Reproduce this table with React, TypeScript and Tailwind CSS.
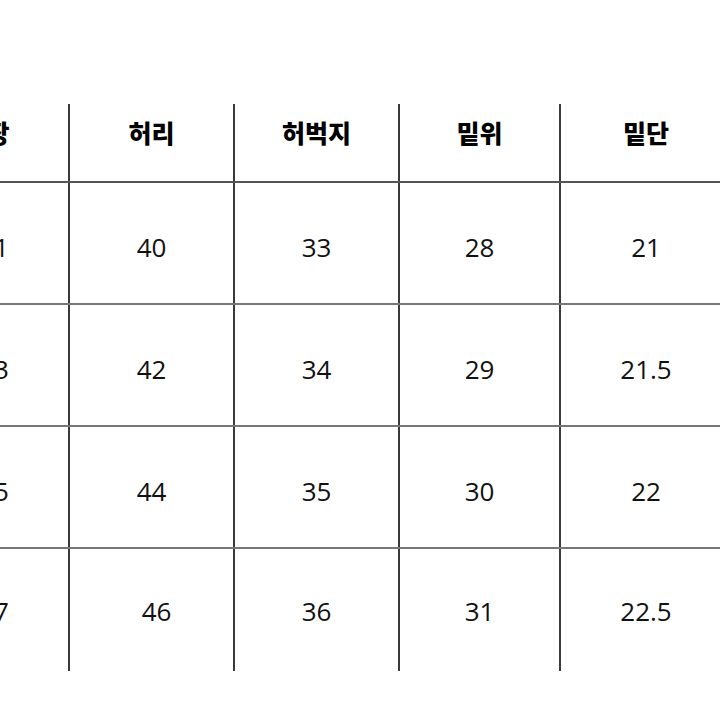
import React from "react";

const headers = ["총장", "허리", "허벅지", "밑위", "밑단"];
const rows = [
  ["101", "40", "33", "28", "21"],
  ["103", "42", "34", "29", "21.5"],
  ["105", "44", "35", "30", "22"],
  ["107", "46", "36", "31", "22.5"],
];
const widths = ["w-[165px]", "w-[165px]", "w-[165px]", "w-[161px]", "w-[170px]"];

export default function App() {
  return (
    <div className="w-[720px] h-[720px] bg-white overflow-hidden">
      <div className="pt-[104px] ml-[-95px]">
        <div className="flex h-[79px] border-b-2 border-[#555]">
          {headers.map((h, i) => (
            <div
              key={h}
              className={`${widths[i]} shrink-0 flex items-center justify-center pb-[20px] ${i < 4 ? "border-r-2 border-[#3a3a3a]" : ""}`}
              style={{ fontFamily: '"Noto Sans CJK KR", sans-serif' }}
            >
              <span className="text-[25px] font-black text-black leading-none">{h}</span>
            </div>
          ))}
        </div>
        {rows.map((r, ri) => (
          <div
            key={ri}
            className={`flex h-[122px] ${ri < 3 ? "border-b-2 border-[#777]" : ""}`}
          >
            {r.map((c, i) => (
              <div
                key={i}
                className={`${widths[i]} shrink-0 flex items-center justify-center pt-[8px] ${i < 4 ? "border-r-2 border-[#3a3a3a]" : ""} ${ri === 3 && i === 1 ? "pl-[10px]" : ""} ${ri === 3 ? "pb-[6px]" : ""}`}
                style={{ fontFamily: '"Open Sans", sans-serif' }}
              >
                <span className="text-[26px] text-[#111] leading-none">{c}</span>
              </div>
            ))}
          </div>
        ))}
      </div>
    </div>
  );
}
